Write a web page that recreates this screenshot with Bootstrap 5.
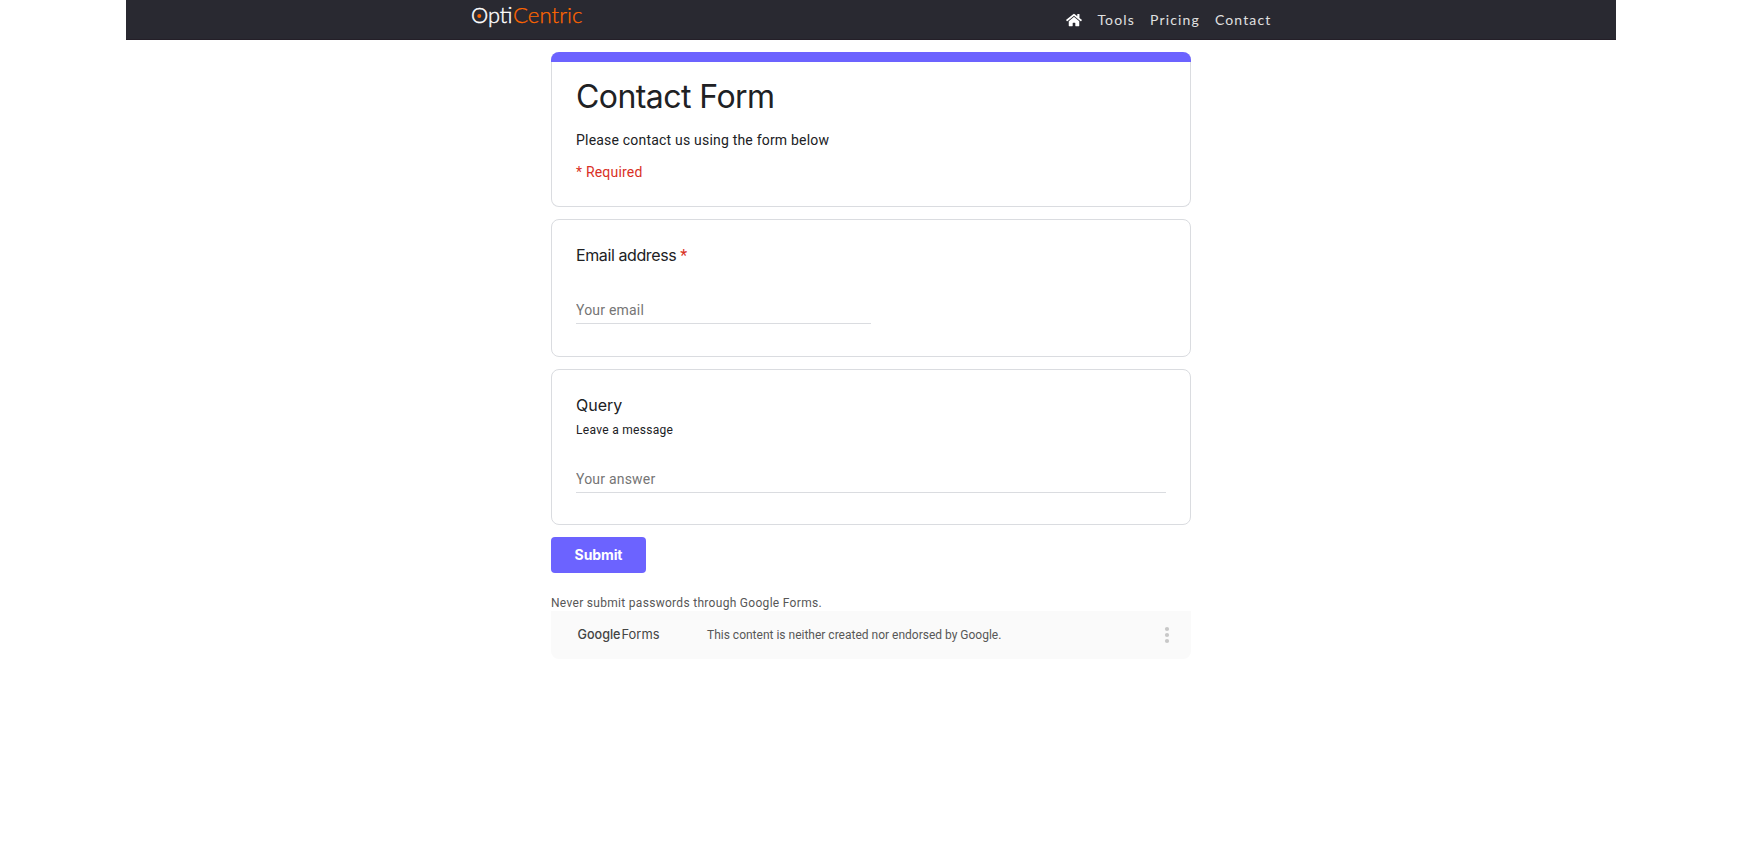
<!DOCTYPE html>
<html lang="en">
<head>
<meta charset="utf-8">
<meta name="viewport" content="width=device-width, initial-scale=1">
<title>OptiCentric - Contact</title>
<link href="https://cdn.jsdelivr.net/npm/bootstrap@5.3.0/dist/css/bootstrap.min.css" rel="stylesheet">
<style>
body{font-family:Roboto,"Liberation Sans",sans-serif;font-size:14px;line-height:20px;letter-spacing:.2px;color:#202124;background:#fff;padding-right:2px}
.site-nav{width:1490px;height:40px;background:#292931;border-bottom:1px solid #241f28}
.nav-inner{width:801px;height:39px}
.nav-links{font-family:Lato,sans-serif;font-size:14px;letter-spacing:1.15px;gap:15px}
.nav-links a{color:#e0e0e0;text-decoration:none}
.form-col{width:640px;margin-top:12px}
.form-card{border:1px solid #dadce0;border-radius:8px;padding:24px;margin-bottom:12px}
.head-card{height:155px;padding:0 0 24px;border-top:0}
.head-card .stripe{height:10px;background:#6c63ff;margin:0 -1px;border-radius:8px 8px 0 0}
.gs{font-family:Inter,sans-serif;color:#202124}
.form-title{font-size:32px;line-height:40px;font-weight:400;letter-spacing:-.56px;padding-top:15px}
.desc{margin-top:13px}
.req{margin-top:12px}
.q-title{font-size:16px;line-height:24px;letter-spacing:0;margin-top:-1px}
.q-title.tight{letter-spacing:-.4px}
.q-title .red{font-family:Roboto,sans-serif}
.line-input{border:0;border-bottom:1px solid #dadce0;border-radius:0;background:none;padding:0 0 2px;height:26px;margin-top:30px;font-size:14px;line-height:22px;letter-spacing:.2px;display:block;outline:0}
.email-input{width:295px}
.line-input::placeholder{color:#757575;opacity:1}
.email-card{height:138px}
.query-card{height:156px}
.sub{font-size:12px;line-height:16px;letter-spacing:.3px;margin-top:5px}
.sub + .line-input{margin-top:29px}
.red{color:#d93025}
.submit-btn{width:95px;height:36px;background:#6c63ff;color:#fff;border:0;border-radius:4px;padding:0;font:700 14px/36px Inter,sans-serif;letter-spacing:-.1px}
.fine{font-size:12px;line-height:16px;color:#575757;letter-spacing:.3px}
.warn{margin-top:22px}
.foot{height:48px;background:#fafafa;border-radius:0 0 8px 8px;padding-left:26px;padding-right:21px}
.foot .fine{margin-left:40px;letter-spacing:0}
</style>
</head>
<body>
<nav class="site-nav mx-auto d-flex justify-content-center">
  <div class="nav-inner d-flex justify-content-between align-items-center">
    <a href="#" aria-label="OptiCentric" class="d-block align-self-start"><svg width="125" height="39" class="d-block" font-family="Lato" font-size="22" font-weight="300" letter-spacing="0"><text x="0" y="23" textLength="41.5" lengthAdjust="spacingAndGlyphs" fill="#fff" stroke="#fff" stroke-width=".4">Opti</text><text x="42" y="23" textLength="69.5" lengthAdjust="spacingAndGlyphs" fill="#ff6600" stroke="#ff6600" stroke-width=".25">Centric</text><circle cx="8.3" cy="16" r="2" fill="#ff6600"/></svg></a>
    <div class="nav-links d-flex align-items-center">
      <a href="#" class="home-link" aria-label="Home"><svg width="16" height="14" viewBox="0 0 576 512" class="d-block" fill="#fff"><path d="M280 148 96 300v164a16 16 0 0 0 16 16h112a16 16 0 0 0 16-16v-96a16 16 0 0 1 16-16h64a16 16 0 0 1 16 16v96a16 16 0 0 0 16 16h112a16 16 0 0 0 16-16V300L296 148a12 12 0 0 0-16 0zM572 251 488 182V44a12 12 0 0 0-12-12h-56a12 12 0 0 0-12 12v72l-90-74a48 48 0 0 0-61 0L4 251a12 12 0 0 0-1 17l25 31a12 12 0 0 0 17 2l235-194a12 12 0 0 1 16 0l235 194a12 12 0 0 0 17-2l26-31a12 12 0 0 0-2-17z"/></svg></a>
      <a href="#">Tools</a>
      <a href="#">Pricing</a>
      <a href="#">Contact</a>
    </div>
  </div>
</nav>
<main class="form-col mx-auto">
  <form>
    <section class="form-card head-card">
      <div class="stripe"></div>
      <div class="px-4">
        <h1 class="gs form-title mb-0">Contact Form</h1>
        <p class="mb-0 desc">Please contact us using the form below</p>
        <p class="mb-0 red req">* Required</p>
      </div>
    </section>
    <section class="form-card email-card">
      <label for="email" class="gs q-title tight d-block">Email address <span class="red">*</span></label>
      <input id="email" class="line-input email-input" type="email" placeholder="Your email">
    </section>
    <section class="form-card query-card">
      <label for="query" class="gs q-title d-block">Query</label>
      <div class="sub">Leave a message</div>
      <input id="query" class="line-input w-100" type="text" placeholder="Your answer">
    </section>
    <button class="submit-btn d-block" type="button">Submit</button>
  </form>
  <div class="fine warn">Never submit passwords through Google Forms.</div>
  <footer class="foot d-flex align-items-center">
    <svg width="90" height="24" font-family="Inter" font-size="13" letter-spacing="0"><text x="0.5" y="16" textLength="43" lengthAdjust="spacingAndGlyphs" font-weight="500" fill="#444">Google</text><text x="44.5" y="16" textLength="38" lengthAdjust="spacingAndGlyphs" fill="#444">Forms</text></svg>
    <span class="fine">This content is neither created nor endorsed by Google.</span>
    <svg class="ms-auto" width="6" height="18" fill="#c8c8c8"><circle cx="3" cy="3" r="2.1"/><circle cx="3" cy="9" r="2.1"/><circle cx="3" cy="15" r="2.1"/></svg>
  </footer>
</main>
<script src="https://cdn.jsdelivr.net/npm/bootstrap@5.3.0/dist/js/bootstrap.bundle.min.js"></script>
</body>
</html>
